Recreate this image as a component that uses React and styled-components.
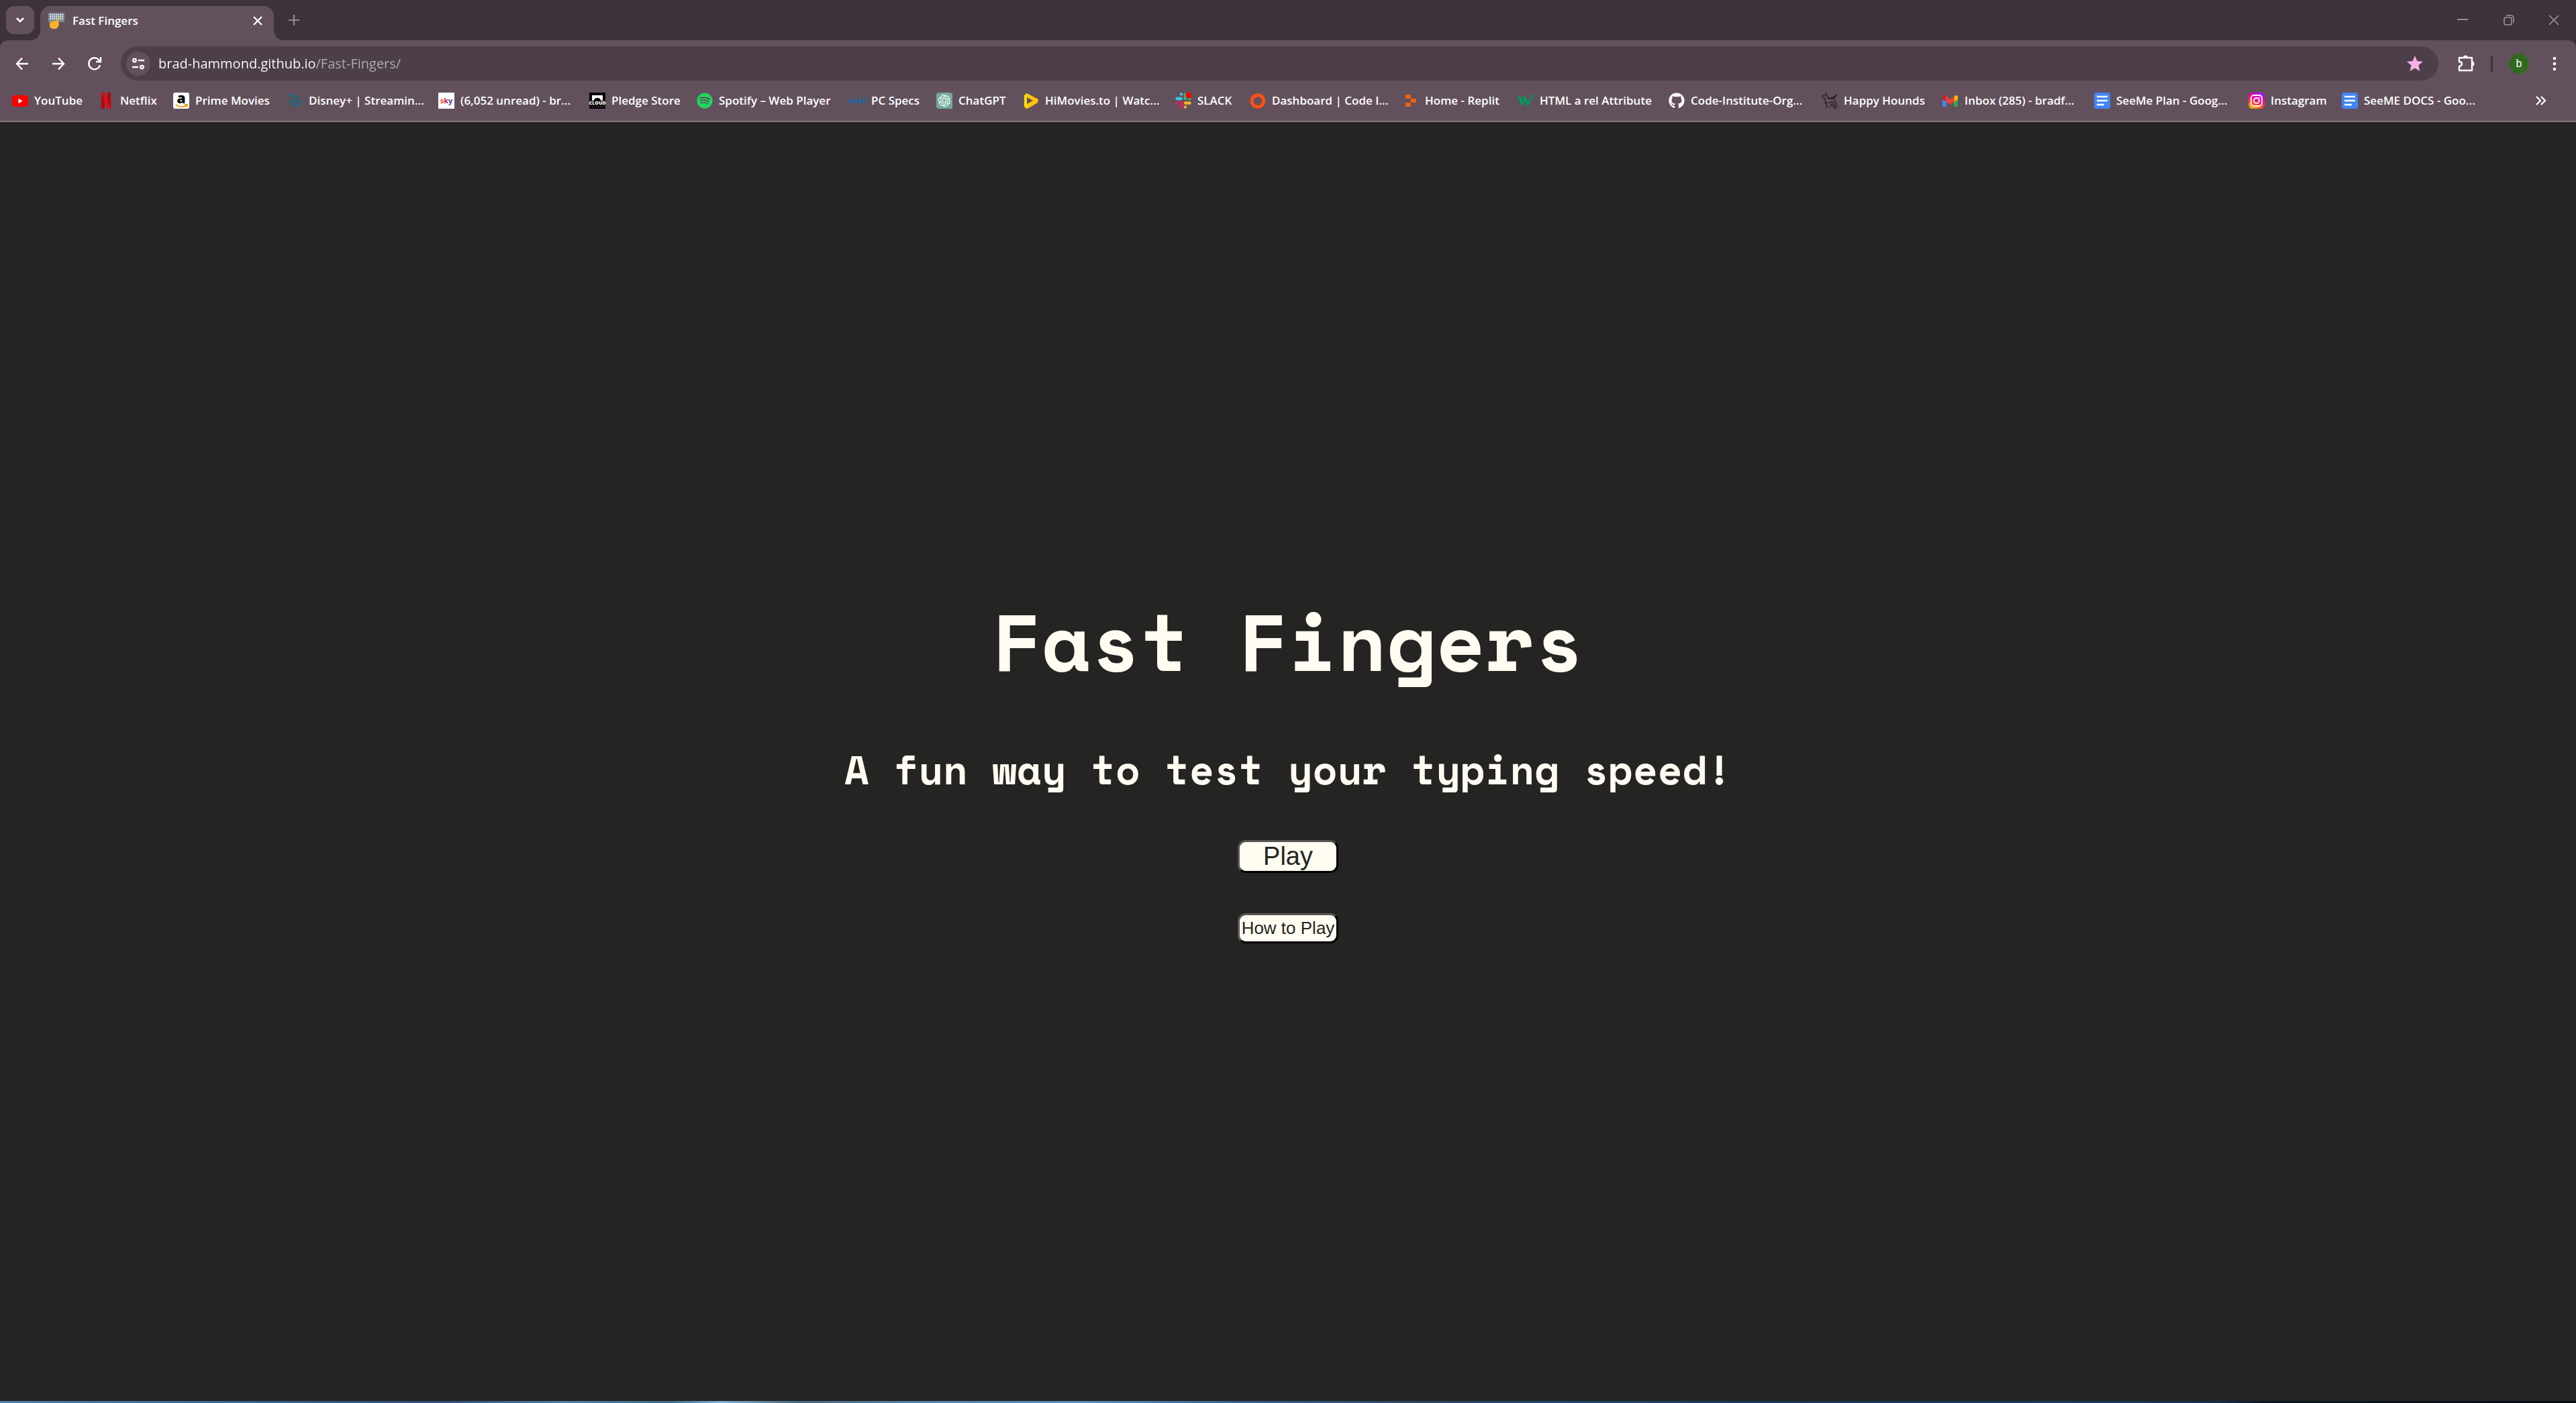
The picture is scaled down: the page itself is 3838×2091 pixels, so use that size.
import React from "react";
import styled, { createGlobalStyle } from "styled-components";
import { FaGithub, FaSpotify } from "react-icons/fa";
import { TbBrandDisney } from "react-icons/tb";
import { SiOpenai } from "react-icons/si";

const GlobalStyle = createGlobalStyle`
  * { box-sizing: border-box; }
  body { margin: 0; background: #252422; }
`;

const ui = `"Segoe UI", "Open Sans", "Noto Sans", sans-serif`;

const Window = styled.div`
  display: flex;
  flex-direction: column;
  min-height: 100vh;
  font-family: ${ui};
  color: #fff;
`;

const IconButton = styled.button`
  display: flex;
  align-items: center;
  justify-content: center;
  flex: none;
  width: ${(p) => p.$w || 44}px;
  height: ${(p) => p.$h || 42}px;
  padding: 0;
  border: 0;
  border-radius: ${(p) => p.$radius || 12}px;
  background: ${(p) => p.$bg || "transparent"};
  color: ${(p) => p.$color || "#fff"};
`;

const TabStrip = styled.div`
  display: flex;
  align-items: center;
  height: 60px;
  padding-left: 9px;
  background: #3d323a;
`;

const Tab = styled.div`
  position: relative;
  align-self: flex-end;
  display: flex;
  align-items: center;
  width: 348px;
  height: 51px;
  margin: 0 8px 0 9px;
  padding: 0 2px 8px 12px;
  border-radius: 15px 15px 0 0;
  background: #62515c;
  &::before, &::after {
    content: "";
    position: absolute;
    bottom: 0;
    width: 15px;
    height: 15px;
  }
  &::before { left: -15px; background: radial-gradient(circle at 0 0, transparent 15px, #62515c 15px); }
  &::after { right: -15px; background: radial-gradient(circle at 100% 0, transparent 15px, #62515c 15px); }
`;

const TabTitle = styled.span`
  flex: 1;
  margin-left: 12px;
  font-size: 17px;
  font-weight: 600;
  line-height: 24px;
`;

const WindowControls = styled.div`
  display: flex;
  margin-left: auto;
`;

const ToolbarBacking = styled.div`
  background: #3d323a;
`;

const Toolbar = styled.div`
  display: flex;
  align-items: center;
  height: 69px;
  padding: 0 8px 0 6px;
  border-radius: 12px 12px 0 0;
  background: #62515c;
`;

const AddressBar = styled.label`
  display: flex;
  align-items: center;
  flex: 1;
  height: 51px;
  margin: 0 19px 0 12px;
  padding: 0 12px 0 8px;
  border-radius: 26px;
  background: #4c3f49;
`;

const AddressInput = styled.input`
  flex: 1;
  min-width: 0;
  margin-left: 12px;
  padding: 0;
  border: 0;
  outline: 0;
  font-family: ${ui};
  font-size: 20px;
  line-height: 36px;
  color: transparent;
  background: linear-gradient(to right, #fff 234px, #b5abb1 234px);
  background-clip: text;
  -webkit-background-clip: text;
`;

const Divider = styled.span`
  width: 3px;
  height: 24px;
  margin: 0 10px 0 15px;
  border-radius: 2px;
  background: #3d323a;
`;

const Avatar = styled.span`
  display: flex;
  align-items: center;
  justify-content: center;
  width: 30px;
  height: 30px;
  border-radius: 50%;
  background: #33691e;
  font-family: Roboto, sans-serif;
  font-size: 16px;
  line-height: 30px;
`;

const Bookmarks = styled.nav`
  display: flex;
  align-items: center;
  justify-content: space-between;
  height: 53px;
  padding: 0 30px 9px 18px;
  border-bottom: 2px solid #857a82;
  background: #62515c;
`;

const BookmarkList = styled.ul`
  display: flex;
  margin: 0;
  padding: 0;
  list-style: none;
`;

const BookmarkItem = styled.li`
  flex: none;
  width: ${(p) => p.$w}px;
`;

const BookmarkLink = styled.a`
  display: flex;
  align-items: center;
  gap: 9px;
  height: 36px;
  color: #fff;
  font-size: 17px;
  font-weight: 600;
  line-height: 24px;
  white-space: nowrap;
  text-decoration: none;
`;

const Page = styled.main`
  flex: 1;
  display: flex;
  flex-direction: column;
  align-items: center;
  justify-content: center;
  background: #252422;
  color: #fffcf2;
`;

const Title = styled.h1`
  margin: 0 0 57px;
  font: 700 120px/180px "Space Mono", "Liberation Mono", monospace;
`;

const Tagline = styled.h2`
  margin: 0 0 60px;
  font: 700 60px/90px "Space Mono", "Liberation Mono", monospace;
`;

const GameButton = styled.button`
  width: 150px;
  height: ${(p) => p.$h}px;
  padding: 0;
  border: 3px solid;
  border-color: #555 #000 #000 #555;
  border-radius: 12px;
  background: #fffcf2;
  color: #252422;
  font: ${(p) => p.$size}px/38px Arial, "Liberation Sans", sans-serif;
  white-space: nowrap;
  & + & { margin-top: 60px; }
`;

const DesktopEdge = styled.div`
  height: 3px;
  background: linear-gradient(to right, #4f7fa8 0%, #3a6a94 8%, #2a4f78 17%, #4f7fa5 22%, #3d6a8c 26%, #7fb0d8 28%, #44687f 31%, #5585ad 36%, #5a8fc0 42%, #36618f 48%, #2c4566 55%, #22466e 60%, #173458 70%, #1b3a60 80%, #142f52 86%, #0a1424 88%, #0a0d12 100%);
`;

const Glyph = styled.svg`
  display: block;
  flex: none;
  overflow: visible;
`;

const Svg = ({ size = 24, children, ...rest }) => (
  <Glyph width={size} height={size} viewBox="0 0 24 24" fill="none" aria-hidden="true" {...rest}>
    {children}
  </Glyph>
);

const Stroke = ({ d, size, width = 2 }) => (
  <Svg size={size}>
    <path d={d} stroke="currentColor" strokeWidth={width} />
  </Svg>
);

const KeyboardIcon = () => (
  <Svg>
    <rect width="24" height="14" y="0" rx="1" fill="#7d8b96" />
    <path d="M2 3h20M2 6h20M2 9h20" stroke="#dbe3e8" strokeWidth="2" strokeDasharray="2 1" />
    <path d="M17 7 14 13c2 1 2 4 1 7s-4 4-7 4-6-2-6-5 0-5 3-6l7-1 3-5c1-1 3-1 2 0z" fill="#fcb72b" />
    <path d="M3 16c3-1 6-2 8-1M4 20c3 0 5 0 7-1" stroke="#e99a1c" strokeWidth="1" />
  </Svg>
);

const YouTubeIcon = () => (
  <Svg>
    <rect y="4" width="24" height="17" rx="4" fill="#f00" />
    <path d="m9.5 8.800 6.200 3.700-6.200 3.700z" fill="#fff" />
  </Svg>
);

const NetflixIcon = () => (
  <Svg>
    <path d="M5 0h5v24H5zM14 0h5v24h-5z" fill="#b20710" />
    <path d="M5 0h5l9 24h-5z" fill="#e50914" />
  </Svg>
);

const AmazonIcon = () => (
  <Svg>
    <rect width="24" height="24" rx="3" fill="#fff" />
    <text x="12" y="16" textAnchor="middle" fontFamily="Open Sans, sans-serif" fontWeight="800" fontSize="21" fill="#000">a</text>
    <path d="M4 18c5 4 11 4 16 1M17 18h4l-1 4" stroke="#ff9900" strokeWidth="1.800" />
  </Svg>
);

const SkyIcon = () => (
  <Svg>
    <defs>
      <linearGradient id="sky">
        <stop offset="0" stopColor="#f60" />
        <stop offset=".4" stopColor="#d0104c" />
        <stop offset="1" stopColor="#1a4fd0" />
      </linearGradient>
    </defs>
    <rect width="24" height="24" fill="#fff" />
    <text x="12" y="16" textAnchor="middle" fontFamily="Open Sans, sans-serif" fontWeight="700" fontSize="11" fill="url(#sky)">sky</text>
  </Svg>
);

const CloudIcon = () => (
  <Svg>
    <rect width="24" height="24" fill="#000" />
    <path d="M4 4h16v8h-3c0-3-2-4-5-4s-5 1-5 4H4z" fill="#fff" />
    <text x="12" y="18" textAnchor="middle" fontFamily="Open Sans, sans-serif" fontWeight="800" fontSize="7" fill="#fff">CLOUD</text>
    <path d="M1 21h22" stroke="#aaa" strokeDasharray="1 2" />
  </Svg>
);

const IntelIcon = () => (
  <Svg>
    <text x="12" y="16" textAnchor="middle" fontFamily="Open Sans, sans-serif" fontWeight="700" fontSize="11" fill="#0b68b5">intel</text>
  </Svg>
);

const ChatIcon = () => (
  <Svg>
    <path d="M4 0h16a4 4 0 0 1 4 4v20H4a4 4 0 0 1-4-4V4a4 4 0 0 1 4-4z" fill="#74aa9c" />
    <SiOpenai x="3" y="3" size={18} color="#fff" />
  </Svg>
);

const MoviesIcon = () => (
  <Svg>
    <path d="m6 1 17 9-1 5L7 24l-4-1 1-5 11-6L6 7z" fill="#ffc40c" />
    <path d="M2 4 6 1v22l-4-2z" fill="#ffe100" />
  </Svg>
);

const SlackIcon = () => (
  <Svg strokeWidth="4.500" strokeLinecap="round">
    <path d="M2.500 9h6M9 2.500v.100" stroke="#36c5f0" />
    <path d="M15 3v6M21 9h.500" stroke="#2eb67d" />
    <path d="M15 15.500h6.500M15 21.500v.100" stroke="#ecb22e" />
    <path d="M9 15v6.500M2.500 15h.100" stroke="#e01e5a" />
    <circle cx="20" cy="4" r="4.500" fill="#f00" stroke="none" />
  </Svg>
);

const RingIcon = () => (
  <Svg>
    <circle cx="12" cy="12.500" r="8.800" stroke="#ff4f14" strokeWidth="5" />
  </Svg>
);

const ReplitIcon = () => (
  <Svg fill="#f26207">
    <rect x="4" y="3" width="8" height="6" rx="1" fill="#f26207" />
    <rect x="12" y="9" width="8" height="6" rx="1" fill="#f26207" />
    <rect x="4" y="15" width="8" height="6" rx="1" fill="#f26207" />
  </Svg>
);

const W3Icon = () => (
  <Svg>
    <path d="M0 6h5l3 7 1-2-2-5h5l3 7 1-3 4 1-4 9h-2l-4-7-3 7H6z" fill="#059862" />
    <path d="M19 4.500h4l-2 2.500c3 0 2.500 4-1.500 3" stroke="#059862" strokeWidth="1.300" />
  </Svg>
);

const HoundIcon = () => (
  <Svg stroke="#252024" strokeWidth="1.300" strokeLinejoin="round">
    <path d="m1 5 4-1 2-3 1 4 3 4 7 0 5-6M1 5l1 3 3 0 1 5 2 3-4-1M7 15l1 7H6M10 15l5-1 2 0 2 4 2 5h-2l-4-6-3 6M18 9l3 6 2 7M9 9l9-2 5-4" />
  </Svg>
);

const GmailIcon = () => (
  <Svg>
    <path d="M0 8v11q0 2 2 2h4V11z" fill="#4285f4" />
    <path d="M17 11v10h4q2 0 2-2V7z" fill="#34a853" />
    <path d="M17 6q5-4 6 0v4l-6 4z" fill="#fbbc04" />
    <path d="M0 6q1-4 6-1v8L0 10z" fill="#c5221f" />
    <path d="m5 5 6.500 5L18 5v8l-6.500 5L5 13z" fill="#ea4335" />
  </Svg>
);

const DocsIcon = () => (
  <Svg>
    <rect width="24" height="24" rx="3" fill="#4285f4" />
    <path d="M4 6h16M4 12h16M4 18h11" stroke="#fff" strokeWidth="2.600" />
  </Svg>
);

const InstagramIcon = () => (
  <Svg>
    <defs>
      <linearGradient id="insta" x1=".2" y1="1" x2=".6" y2="0">
        <stop offset="0" stopColor="#ffc800" />
        <stop offset=".3" stopColor="#ff4b2b" />
        <stop offset=".65" stopColor="#ff0090" />
        <stop offset="1" stopColor="#a80cff" />
      </linearGradient>
    </defs>
    <rect width="24" height="24" rx="6" fill="url(#insta)" />
    <rect x="4" y="4" width="16" height="16" rx="4" stroke="#fff" strokeWidth="1.800" />
    <circle cx="12" cy="12" r="4" stroke="#fff" strokeWidth="1.800" />
    <circle cx="16.500" cy="7.500" r="1" fill="#fff" />
  </Svg>
);

const bookmarks = [
  { label: "YouTube", width: 128, icon: <YouTubeIcon /> },
  { label: "Netflix", width: 112, icon: <NetflixIcon /> },
  { label: "Prime Movies", width: 169, icon: <AmazonIcon /> },
  { label: "Disney+ | Streamin...", width: 226, icon: <TbBrandDisney size={24} color="#126b80" aria-hidden="true" /> },
  { label: "(6,052 unread) - br...", width: 225, icon: <SkyIcon /> },
  { label: "Pledge Store", width: 160, icon: <CloudIcon /> },
  { label: "Spotify – Web Player", width: 227, icon: <FaSpotify size={24} color="#1ed760" aria-hidden="true" /> },
  { label: "PC Specs", width: 130, icon: <IntelIcon /> },
  { label: "ChatGPT", width: 129, icon: <ChatIcon /> },
  { label: "HiMovies.to | Watc...", width: 227, icon: <MoviesIcon /> },
  { label: "SLACK", width: 111, icon: <SlackIcon /> },
  { label: "Dashboard | Code I...", width: 228, icon: <RingIcon /> },
  { label: "Home - Replit", width: 171, icon: <ReplitIcon /> },
  { label: "HTML a rel Attribute", width: 225, icon: <W3Icon /> },
  { label: "Code-Institute-Org...", width: 228, icon: <FaGithub size={24} color="#fff" aria-hidden="true" /> },
  { label: "Happy Hounds", width: 180, icon: <HoundIcon /> },
  { label: "Inbox (285) - bradf...", width: 226, icon: <GmailIcon /> },
  { label: "SeeMe Plan - Goog...", width: 230, icon: <DocsIcon /> },
  { label: "Instagram", width: 139, icon: <InstagramIcon /> },
  { label: "SeeME DOCS - Goo...", width: 206, icon: <DocsIcon /> },
];

export default function App() {
  return (
    <Window>
      <GlobalStyle />
      <header>
        <TabStrip>
          <IconButton $w={42} $bg="#62515c" aria-label="Search tabs">
            <Stroke d="m7 9 5 5 5-5" size={24} width={2.5} />
          </IconButton>
          <Tab>
            <KeyboardIcon />
            <TabTitle>Fast Fingers</TabTitle>
            <IconButton $w={44} aria-label="Close tab">
              <Stroke d="m6 6 12 12M18 6 6 18" size={24} width={2.3} />
            </IconButton>
          </Tab>
          <IconButton $color="#93898f" aria-label="New tab">
            <Stroke d="M12 4v16M4 12h16" width={2.2} />
          </IconButton>
          <WindowControls>
            <IconButton $w={68} $color="#9b9297" aria-label="Minimise">
              <Stroke d="M4 11h16" width={2} />
            </IconButton>
            <IconButton $w={69} $color="#9b9297" aria-label="Restore">
              <Svg stroke="currentColor" strokeWidth="1.600">
                <rect x="5" y="8" width="11" height="11" rx="2.500" />
                <path d="M8 5h7q4 0 4 4v7" />
              </Svg>
            </IconButton>
            <IconButton $w={66} $color="#9b9297" aria-label="Close window">
              <Stroke d="m5 5 14 14M19 5 5 19" width={1.6} />
            </IconButton>
          </WindowControls>
        </TabStrip>
        <ToolbarBacking>
          <Toolbar>
            <IconButton $w={54} aria-label="Back">
              <Stroke d="M21 12H4M12 3.500 4 12l8 8.500" width={2.4} />
            </IconButton>
            <IconButton $w={54} aria-label="Forward">
              <Stroke d="M3 12h17M12 3.500 20 12l-8 8.500" width={2.4} />
            </IconButton>
            <IconButton $w={54} aria-label="Reload">
              <Stroke d="M20 14a8.500 8.500 0 1 1-2-8l3 3M21 2v7h-7" width={2.4} />
            </IconButton>
            <AddressBar>
              <IconButton $w={36} $h={36} $radius={18} $bg="#62515c" aria-label="Site information">
                <Svg stroke="currentColor" strokeWidth="2.300">
                  <circle cx="6.500" cy="7" r="2.300" />
                  <path d="M12 7h9M3 17h9" />
                  <circle cx="17.500" cy="17" r="2.300" />
                </Svg>
              </IconButton>
              <AddressInput aria-label="Address" spellCheck="false" defaultValue="brad-hammond.github.io/Fast-Fingers/" />
              <IconButton $w={46} $color="#f7b1e8" aria-label="Bookmark this page">
                <Svg>
                  <path d="m12 0 3.300 8 8.700.700-6.600 5.600 2 8.700L12 18.400 4.600 23l2-8.700L0 8.700 8.700 8z" fill="currentColor" />
                </Svg>
              </IconButton>
            </AddressBar>
            <IconButton aria-label="Extensions">
              <Svg>
                <path d="M2 3h19v19H2v-6q4-1 4-4t-4-3z" stroke="currentColor" strokeWidth="2.400" strokeLinejoin="round" />
                <path d="M8 3a3.500 3.500 0 0 1 7 0zM21 8.500a3.500 3.500 0 0 1 0 7z" fill="currentColor" />
              </Svg>
            </IconButton>
            <Divider />
            <IconButton $w={58} aria-label="Profile">
              <Avatar>b</Avatar>
            </IconButton>
            <IconButton $w={48} aria-label="Menu">
              <Svg>
                <circle cx="12" cy="4" r="2.300" fill="currentColor" />
                <circle cx="12" cy="12" r="2.300" fill="currentColor" />
                <circle cx="12" cy="20" r="2.300" fill="currentColor" />
              </Svg>
            </IconButton>
          </Toolbar>
        </ToolbarBacking>
        <Bookmarks aria-label="Bookmarks">
          <BookmarkList>
            {bookmarks.map((b) => (
              <BookmarkItem key={b.label} $w={b.width}>
                <BookmarkLink href="#">
                  {b.icon}
                  {b.label}
                </BookmarkLink>
              </BookmarkItem>
            ))}
          </BookmarkList>
          <IconButton aria-label="More bookmarks">
            <Stroke d="m5 6 6 6-6 6M12 6l6 6-6 6" width={2.3} />
          </IconButton>
        </Bookmarks>
      </header>
      <Page>
        <Title>Fast Fingers</Title>
        <Tagline>A fun way to test your typing speed!</Tagline>
        <GameButton type="button" $h={49} $size={38}>Play</GameButton>
        <GameButton type="button" $h={45} $size={26}>How to Play</GameButton>
      </Page>
      <DesktopEdge />
    </Window>
  );
}
